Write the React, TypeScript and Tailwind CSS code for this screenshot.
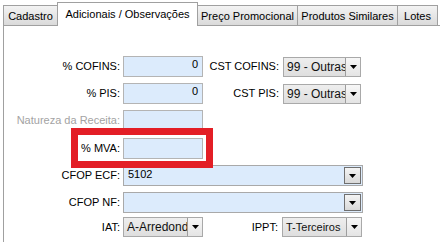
import type { ReactNode } from "react";

const tabs = [
  { label: "Cadastro", w: "w-[55px]" },
  { label: "Adicionais / Observações", w: "w-[141px]", active: true },
  { label: "Preço Promocional", w: "w-[101px]" },
  { label: "Produtos Similares", w: "w-[101px]" },
  { label: "Lotes", w: "w-[41px]" },
];

function Arrow() {
  return (
    <svg width="7" height="4" viewBox="0 0 7 4">
      <path d="M0 0h7L3.5 4z" fill="#000" />
    </svg>
  );
}

function Label({ children, w = "w-[116px]", muted }: { children: ReactNode; w?: string; muted?: boolean }) {
  return (
    <div className={`${w} shrink-0 text-right leading-[21px] ${muted ? "text-[#a3a3a3]" : "text-black"}`}>
      {children}
    </div>
  );
}

function TextInput({ value = "", right }: { value?: string; right?: boolean }) {
  return (
    <div
      className={`ml-[3px] h-[21px] w-[80px] border border-[#b4b4b4] bg-[#dcebfc] px-[4px] pt-[1px] leading-[12px] ${
        right ? "text-right" : ""
      }`}
    >
      {value}
    </div>
  );
}

function Select({
  text,
  w,
  gap = "ml-[4px]",
  size = "text-[12px]",
}: {
  text: string;
  w: string;
  gap?: string;
  size?: string;
}) {
  return (
    <div className={`${gap} flex h-[20px] ${w} shrink-0 border border-[#a9a9a9] bg-gradient-to-b from-[#eeeeee] to-[#dedede]`}>
      <div className={`flex-1 overflow-hidden whitespace-nowrap pl-[3px] ${size} leading-[18px] text-[#111]`}>{text}</div>
      <div className="flex w-[15px] shrink-0 items-center justify-center border-l border-[#9d9d9d] bg-gradient-to-b from-[#f7f7f7] to-[#e4e4e4]">
        <Arrow />
      </div>
    </div>
  );
}

function Combo({ text = "" }: { text?: string }) {
  return (
    <div className="ml-[3px] flex h-[21px] w-[240px] border border-[#a9a9a9] bg-[#dcebfc] p-px">
      <div className="flex-1 pl-[3px] pt-[1px] leading-[12px]">{text}</div>
      <div className="flex w-[17px] shrink-0 items-center justify-center border border-[#6f6f6f] bg-gradient-to-b from-[#f4f4f4] to-[#d9d9d9]">
        <Arrow />
      </div>
    </div>
  );
}

export default function App() {
  return (
    <div className="h-[242px] w-[440px] overflow-hidden bg-white font-['Liberation_Sans',Arial,sans-serif] text-[11px] text-black">
      {/* Abas */}
      <div className="ml-[3px] flex h-[25px] items-end">
        {tabs.map((tab, i) => (
          <div
            key={tab.label}
            className={`${tab.w} ${i > 0 ? "-ml-px" : ""} flex items-center justify-center whitespace-nowrap border border-b-0 border-[#a0a0a0] ${
              tab.active
                ? "relative z-10 -mb-px h-[24px] bg-white"
                : "h-[20px] bg-gradient-to-b from-[#f3f3f3] to-[#dadada] pt-px"
            }`}
          >
            {tab.label}
          </div>
        ))}
      </div>

      {/* Painel */}
      <div className="ml-[3px] h-[217px] border-l border-t border-[#a0a0a0] pt-[30px]">
        <div className="flex h-[21px]">
          <Label>% COFINS:</Label>
          <TextInput value="0" right />
          <Label w="w-[76px]">CST COFINS:</Label>
          <div className="pt-px">
            <Select text="99 - Outras" w="w-[78px]" />
          </div>
        </div>

        <div className="mt-[6px] flex h-[21px]">
          <Label>% PIS:</Label>
          <TextInput value="0" right />
          <Label w="w-[76px]">CST PIS:</Label>
          <div className="pt-px">
            <Select text="99 - Outras" w="w-[78px]" />
          </div>
        </div>

        <div className="mt-[6px] flex h-[21px]">
          <Label muted>Natureza da Receita:</Label>
          <TextInput />
        </div>

        <div className="relative mt-[7px] flex h-[21px]">
          <Label>% MVA:</Label>
          <TextInput />
          {/* destaque */}
          <div className="absolute left-[67px] top-[-10px] h-[40px] w-[142px] border-[7px] border-[#e31e26]" />
        </div>

        <div className="mt-[6px] flex h-[21px]">
          <Label>CFOP ECF:</Label>
          <Combo text="5102" />
        </div>

        <div className="mt-[6px] flex h-[21px]">
          <Label>CFOP NF:</Label>
          <Combo />
        </div>

        <div className="mt-[4px] flex h-[20px] items-center">
          <Label>IAT:</Label>
          <Select text="A-Arredondamento" w="w-[80px]" gap="ml-[3px]" />
          <Label w="w-[75px]">IPPT:</Label>
          <Select text="T-Terceiros" w="w-[80px]" gap="ml-[4px]" size="text-[11px]" />
        </div>
      </div>
    </div>
  );
}
